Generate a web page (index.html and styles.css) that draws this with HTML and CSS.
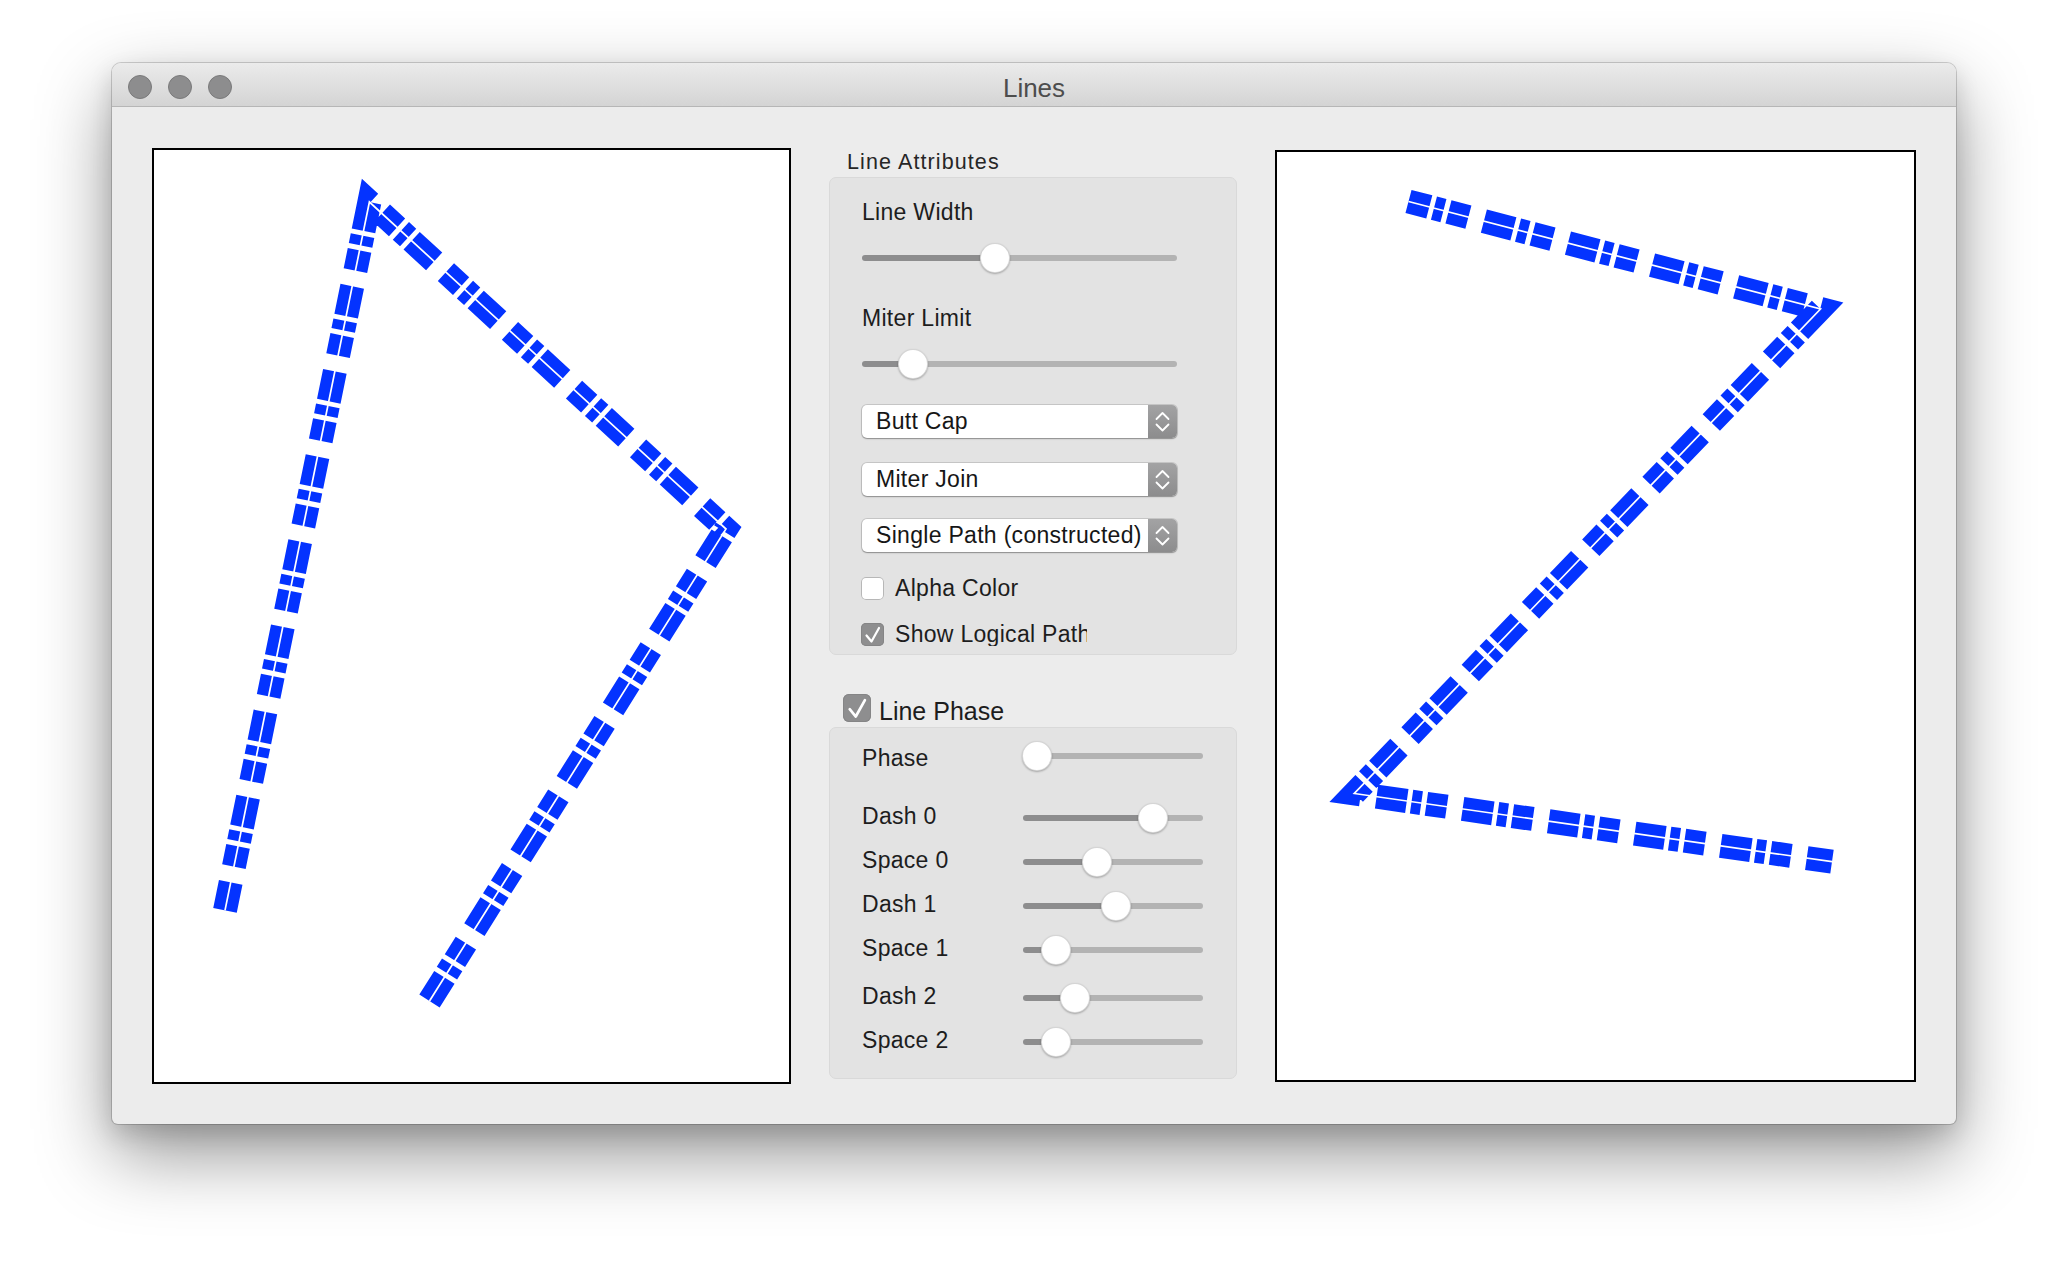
FILE: index.html
```html
<!DOCTYPE html>
<html>
<head>
<meta charset="utf-8">
<title>Lines</title>
<link rel="stylesheet" href="styles.css">
</head>
<body>
<div class="window">
  <div class="titlebar">
    <div class="lights"><span class="light"></span><span class="light"></span><span class="light"></span></div>
    <div class="title">Lines</div>
    <div class="spacer"></div>
  </div>
  <div class="content">
    <div class="canvas canvas-left">
      <svg class="drawing" viewBox="154 150 635 932" width="635" height="932">
        <path class="stroke stroke-left" d="M429.5 1001 L726 529 L369.4 202 L225 910.3"/>
        <path class="logical" d="M429.5 1001 L726 529 L369.4 202 L225 910.3"/>
      </svg>
    </div>

    <div class="controls">
      <div class="group-title">Line Attributes</div>
      <div class="box box-attrs">
        <div class="label label-first">Line Width</div>
        <div class="slider slider-wide slider-gap">
          <div class="track-fill" style="width:133px"></div><div class="knob"></div><div class="track-rest"></div>
        </div>
        <div class="label label-second">Miter Limit</div>
        <div class="slider slider-wide slider-gap">
          <div class="track-fill" style="width:51px"></div><div class="knob"></div><div class="track-rest"></div>
        </div>
        <div class="popup popup-1">
          <div class="popup-text">Butt Cap</div>
          <div class="stepper"><svg width="29" height="33" viewBox="0 0 29 33"><polyline points="8.5,14 14.5,8 20.5,14"/><polyline points="8.5,19.5 14.5,25.5 20.5,19.5"/></svg></div>
        </div>
        <div class="popup popup-2">
          <div class="popup-text">Miter Join</div>
          <div class="stepper"><svg width="29" height="33" viewBox="0 0 29 33"><polyline points="8.5,14 14.5,8 20.5,14"/><polyline points="8.5,19.5 14.5,25.5 20.5,19.5"/></svg></div>
        </div>
        <div class="popup popup-3">
          <div class="popup-text">Single Path (constructed)</div>
          <div class="stepper"><svg width="29" height="33" viewBox="0 0 29 33"><polyline points="8.5,14 14.5,8 20.5,14"/><polyline points="8.5,19.5 14.5,25.5 20.5,19.5"/></svg></div>
        </div>
        <div class="check-row check-alpha">
          <div class="cb"></div>
          <div class="cb-label">Alpha Color</div>
        </div>
        <div class="check-row check-show">
          <div class="cb cb-on"><svg width="23" height="23" viewBox="0 0 23 23"><polyline points="5.5,12.5 10.5,18.5 18,5"/></svg></div>
          <div class="cb-label cb-clip">Show Logical Path</div>
        </div>
      </div>

      <div class="phase-head">
        <div class="cb cb-on cb-big"><svg width="28" height="28" viewBox="0 0 23 23"><polyline points="5.5,12.5 10.5,18.5 18,5"/></svg></div>
        <div class="phase-title">Line Phase</div>
      </div>
      <div class="box box-phase">
        <div class="prow">
          <div class="plabel plabel-phase">Phase</div>
          <div class="slider slider-short"><div class="track-fill" style="width:14px"></div><div class="knob"></div><div class="track-rest"></div></div>
        </div>
        <div class="prow prow-dash0">
          <div class="plabel">Dash 0</div>
          <div class="slider slider-short"><div class="track-fill" style="width:130px"></div><div class="knob"></div><div class="track-rest"></div></div>
        </div>
        <div class="prow">
          <div class="plabel">Space 0</div>
          <div class="slider slider-short"><div class="track-fill" style="width:74px"></div><div class="knob"></div><div class="track-rest"></div></div>
        </div>
        <div class="prow">
          <div class="plabel">Dash 1</div>
          <div class="slider slider-short"><div class="track-fill" style="width:93px"></div><div class="knob"></div><div class="track-rest"></div></div>
        </div>
        <div class="prow">
          <div class="plabel">Space 1</div>
          <div class="slider slider-short"><div class="track-fill" style="width:33px"></div><div class="knob"></div><div class="track-rest"></div></div>
        </div>
        <div class="prow prow-dash2">
          <div class="plabel">Dash 2</div>
          <div class="slider slider-short"><div class="track-fill" style="width:52px"></div><div class="knob"></div><div class="track-rest"></div></div>
        </div>
        <div class="prow">
          <div class="plabel">Space 2</div>
          <div class="slider slider-short"><div class="track-fill" style="width:33px"></div><div class="knob"></div><div class="track-rest"></div></div>
        </div>
      </div>
    </div>

    <div class="canvas canvas-right">
      <svg class="drawing" viewBox="1277 152 637 928" width="637" height="928">
        <path class="stroke stroke-right" d="M1408.5 201.5 L1820.5 309 L1354.3 793.5 L1832 861.7"/>
        <path class="logical" d="M1408.5 201.5 L1820.5 309 L1354.3 793.5 L1832 861.7"/>
      </svg>
    </div>
  </div>
</div>
</body>
</html>
```

FILE: styles.css
```css
html, body {
  margin: 0;
  padding: 0;
}
body {
  width: 2068px;
  height: 1284px;
  overflow: hidden;
  background: #ffffff;
  font-family: "Liberation Sans", Arial, sans-serif;
  color: #1d1d1d;
}
.window {
  width: 1844px;
  height: 1061px;
  margin: 63px 0 0 112px;
  background: #ececec;
  border-radius: 9px 9px 6px 6px;
  box-shadow: 0 0 0 1px rgba(0,0,0,0.17), 0 30px 75px rgba(0,0,0,0.42), 0 10px 24px rgba(0,0,0,0.14);
  overflow: hidden;
  display: flex;
  flex-direction: column;
}
.titlebar {
  height: 43px;
  flex: none;
  border-bottom: 1px solid #b6b6b6;
  background: linear-gradient(#ebebeb, #d4d4d4);
  display: grid;
  grid-template-columns: 1fr auto 1fr;
  align-items: center;
}
.lights {
  display: flex;
  gap: 16px;
  padding-left: 16px;
  padding-top: 1px;
}
.light {
  width: 24px;
  height: 24px;
  box-sizing: border-box;
  border-radius: 50%;
  background: #8d8d8e;
  border: 1px solid #7a7a7b;
}
.title {
  font-size: 26px;
  line-height: 43px;
  padding-top: 4px;
  color: #4d4d4d;
}
.content {
  flex: 1;
  display: flex;
  align-items: flex-start;
  gap: 38px;
  padding: 41px 40px 0 40px;
}
.canvas {
  flex: none;
  background: #ffffff;
  border: 2px solid #000000;
}
.canvas-left {
  width: 635px;
  height: 932px;
}
.canvas-right {
  width: 637px;
  height: 928px;
  margin-top: 2px;
}
.drawing {
  display: block;
}
.stroke {
  fill: none;
  stroke: #0433ff;
  stroke-width: 24;
  stroke-linejoin: miter;
  stroke-linecap: butt;
  stroke-miterlimit: 10;
  stroke-dasharray: 30.5 4.8 9.8 5.2 20.6 16;
}
.stroke-left {
  stroke-dashoffset: 2.5;
}
.stroke-right {
  stroke-dashoffset: 9;
}
.logical {
  fill: none;
  stroke: #ffffff;
  stroke-width: 1.7;
  stroke-linejoin: miter;
}
.controls {
  width: 408px;
  flex: none;
}
.group-title {
  font-size: 21.5px;
  letter-spacing: 1.1px;
  line-height: 27px;
  margin-top: 1px;
  padding-left: 18px;
  color: #262626;
}
.box {
  box-sizing: border-box;
  background: #e3e3e3;
  border: 1px solid #d9d9d9;
  border-radius: 7px;
  padding-left: 32px;
}
.box-attrs {
  height: 478px;
  margin-top: 1px;
  padding-top: 20px;
}
.label {
  font-size: 23px;
  letter-spacing: 0.3px;
  line-height: 28px;
}
.label-second {
  margin-top: 31px;
}
.slider {
  display: flex;
  align-items: center;
  height: 30px;
  flex: none;
}
.slider-gap {
  margin-top: 17px;
}
.slider-wide {
  width: 315px;
}
.slider-short {
  width: 180px;
}
.track-fill {
  height: 6px;
  flex: none;
  background: #8d8d8e;
  border-radius: 3px 0 0 3px;
}
.track-rest {
  flex: 1;
  height: 6px;
  background: #b3b3b3;
  border-radius: 0 3px 3px 0;
}
.knob {
  width: 30px;
  height: 30px;
  flex: none;
  box-sizing: border-box;
  margin: 0 -15px;
  border-radius: 50%;
  background: #ffffff;
  border: 1px solid rgba(0,0,0,0.16);
  box-shadow: 0 1px 2px rgba(0,0,0,0.28);
  position: relative;
  z-index: 1;
}
.popup {
  width: 315px;
  height: 33px;
  display: flex;
  background: #ffffff;
  border-radius: 5px;
  box-shadow: 0 0 0 1px rgba(0,0,0,0.12), 0 1px 1.5px rgba(0,0,0,0.3);
  overflow: hidden;
}
.popup-1 { margin-top: 26px; }
.popup-2 { margin-top: 25px; }
.popup-3 { margin-top: 23px; }
.popup-text {
  flex: 1;
  padding-left: 14px;
  font-size: 23px;
  letter-spacing: 0.3px;
  line-height: 33px;
  white-space: nowrap;
  overflow: hidden;
  color: #161616;
}
.stepper {
  width: 29px;
  flex: none;
  background: linear-gradient(#a3a3a4, #8c8c8d);
}
.stepper svg {
  display: block;
}
.stepper polyline {
  fill: none;
  stroke: #ffffff;
  stroke-width: 1.8;
  stroke-linecap: round;
  stroke-linejoin: round;
}
.check-row {
  display: flex;
  align-items: center;
  height: 24px;
}
.check-alpha { margin-top: 24px; }
.check-show { margin-top: 22px; }
.cb {
  width: 23px;
  height: 23px;
  flex: none;
  box-sizing: border-box;
  border-radius: 5px;
  background: #ffffff;
  box-shadow: inset 0 0 0 1px #b7b7b7;
  margin-left: -1px;
}
.cb-on {
  background: #8e8e8f;
  box-shadow: inset 0 0 0 1px #858586;
}
.cb svg {
  display: block;
}
.cb polyline {
  fill: none;
  stroke: #ffffff;
  stroke-width: 2.2;
  stroke-linecap: round;
  stroke-linejoin: round;
}
.cb-label {
  margin-left: 11px;
  font-size: 23px;
  letter-spacing: 0.3px;
  line-height: 24px;
  white-space: nowrap;
}
.cb-clip {
  width: 192px;
  overflow: hidden;
}
.phase-head {
  display: flex;
  align-items: flex-start;
  margin-top: 39px;
  padding-left: 14px;
}
.cb-big {
  width: 28px;
  height: 28px;
  margin-left: 0;
  border-radius: 6px;
}
.phase-title {
  margin-left: 8px;
  margin-top: 3px;
  font-size: 25px;
  line-height: 28px;
}
.box-phase {
  height: 352px;
  margin-top: 2px;
  padding-top: 13px;
}
.prow {
  display: flex;
  align-items: center;
  height: 30px;
  margin-top: 14px;
}
.prow:first-child {
  margin-top: 0;
}
.prow-dash0 { margin-top: 32px; }
.prow-dash2 { margin-top: 18px; }
.plabel {
  width: 161px;
  flex: none;
  font-size: 23px;
  letter-spacing: 0.3px;
  line-height: 28px;
  padding-bottom: 4px;
}
.plabel-phase {
  padding-bottom: 0;
  padding-top: 4px;
}
```
